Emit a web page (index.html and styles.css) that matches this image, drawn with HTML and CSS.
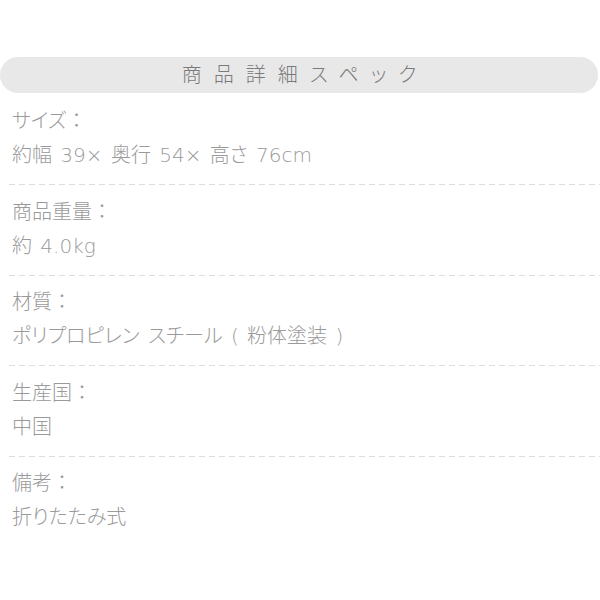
FILE: index.html
```html
<!DOCTYPE html>
<html lang="ja">
<head>
<meta charset="utf-8">
<link rel="stylesheet" href="styles.css">
</head>
<body>
<div class="page">
  <h2 class="title">商品詳細スペック</h2>
  <dl class="specs">
    <div class="row">
      <dt>サイズ<span class="colon">：</span></dt>
      <dd>約幅 39× 奥行 54× 高さ 76cm</dd>
    </div>
    <div class="row">
      <dt>商品重量<span class="colon">：</span></dt>
      <dd>約 4.0kg</dd>
    </div>
    <div class="row">
      <dt>材質<span class="colon">：</span></dt>
      <dd>ポリプロピレン スチール ( 粉体塗装 )</dd>
    </div>
    <div class="row">
      <dt>生産国<span class="colon">：</span></dt>
      <dd>中国</dd>
    </div>
    <div class="row last">
      <dt>備考<span class="colon">：</span></dt>
      <dd>折りたたみ式</dd>
    </div>
  </dl>
</div>
</body>
</html>
```
FILE: styles.css
```css
html, body {
  margin: 0;
  padding: 0;
  background: #fff;
}
body {
  font-family: "DejaVu Sans", "Noto Sans CJK JP", sans-serif;
  font-feature-settings: "palt";
  width: 600px;
  height: 600px;
  overflow: hidden;
}
.page {
  padding-top: 57px;
}
.title {
  margin: 0 2px 0 0;
  height: 36px;
  border-radius: 18px;
  background: #e8e8e8;
  color: #7a7a7a;
  font-size: 20px;
  font-weight: 300;
  line-height: 36px;
  text-align: center;
  letter-spacing: 12px;
  padding-left: 12px;
}
.specs {
  margin: 0;
  padding: 11px 0 0 0;
}
.row {
  margin-left: 9px;
  padding: 0 0 13px 3px;
  margin-bottom: 9.5px;
  background-image: repeating-linear-gradient(to right, #dcdcdc 0 6px, transparent 6px 10px);
  background-size: 100% 1px;
  background-repeat: no-repeat;
  background-position: left bottom;
}
.row dt, .row dd {
  margin: 0;
  font-size: 20px;
  line-height: 34px;
  color: #9a9a9a;
  font-weight: 300;
}
.colon {
  font-feature-settings: normal;
}
.row dd {
  word-spacing: 2px;
}
.row.last {
  background: none;
}
```
